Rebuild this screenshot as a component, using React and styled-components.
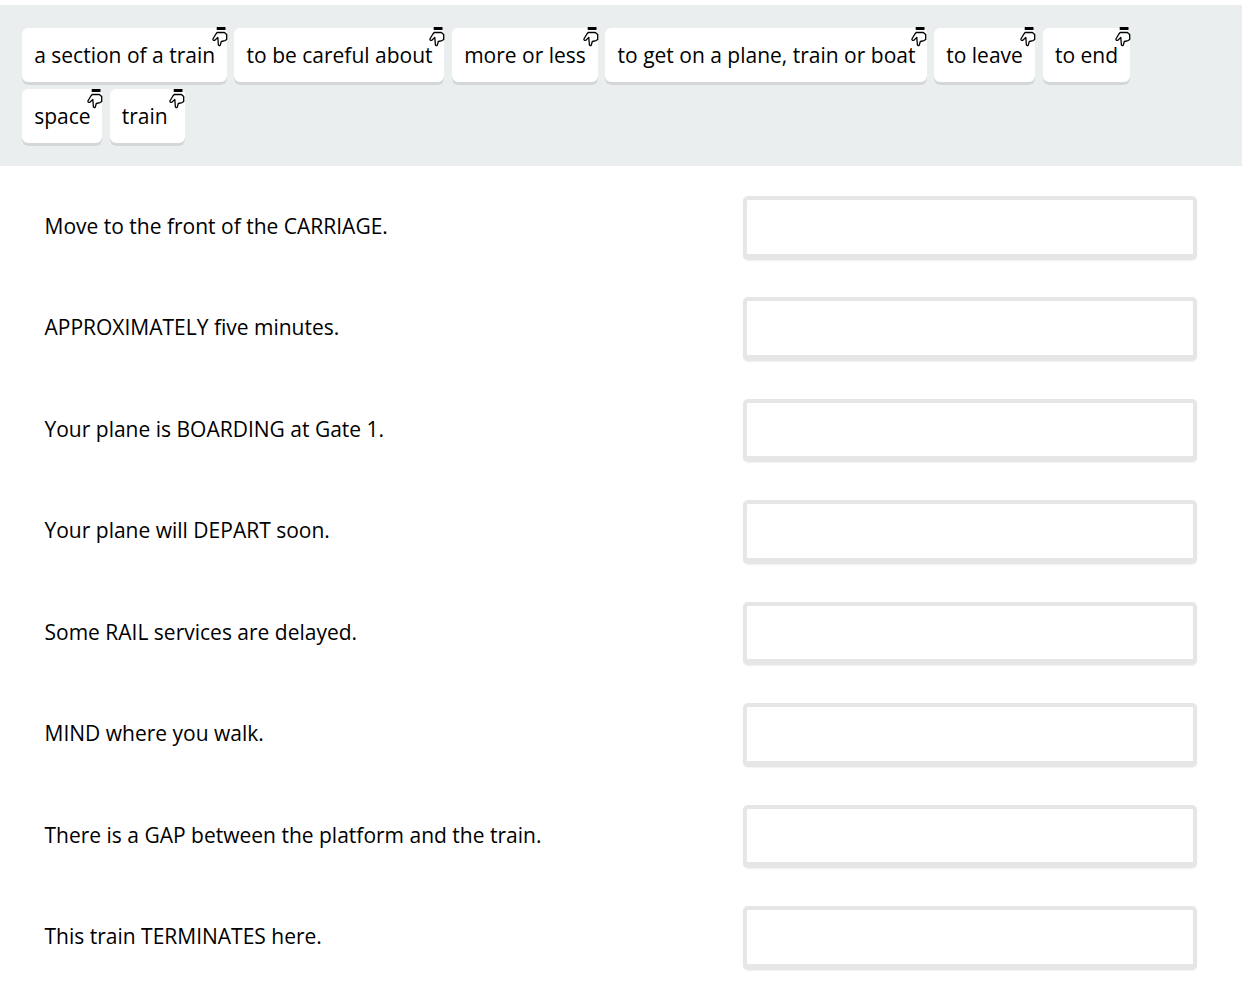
import React from 'react';
import styled, { createGlobalStyle } from 'styled-components';

const GlobalStyle = createGlobalStyle`
  * { box-sizing: border-box; }
  body {
    margin: 0;
    background: #fff;
    color: #000;
    font-family: "Open Sans", sans-serif;
    font-size: 21px;
    overflow: hidden;
  }
`;

const Page = styled.main`
  width: 1242px;
  height: 983px;
  padding-top: 5px;
  overflow: hidden;
`;

const WordBank = styled.section`
  display: flex;
  flex-wrap: wrap;
  align-content: flex-start;
  gap: 4.4px 7.5px;
  height: 161px;
  padding: 23px 60px 0 22px;
  background: #eaeeef;
`;

const Chip = styled.div`
  position: relative;
  width: ${({ $width }) => $width}px;
  height: 57px;
  padding: 0 0 0 12.2px;
  line-height: 54px;
  white-space: nowrap;
  background: #fff;
  border-radius: 6px;
  box-shadow: inset 0 -3px 0 #d3d7d7;
`;

const Hand = styled.svg`
  position: absolute;
  top: -0.6px;
  right: -0.9px;
  width: 16px;
  height: 20px;
  overflow: visible;
`;

const Questions = styled.section`
  padding: 30px 45.5px 0 44.5px;
`;

const Row = styled.div`
  display: flex;
  justify-content: space-between;
  height: 101.45px;
`;

const Prompt = styled.div`
  line-height: 60px;
  white-space: nowrap;
`;

const Slot = styled.div`
  width: 453.5px;
  height: 63.6px;
  border: 4px solid #e6e6e6;
  border-bottom-width: 6px;
  border-radius: 5px;
  background: #fff;
  box-shadow: 0 1px 2px rgba(0, 0, 0, 0.06);
`;

const words = [
  ['a section of a train', 204.9],
  ['to be careful about', 210.1],
  ['more or less', 145.9],
  ['to get on a plane, train or boat', 321.2],
  ['to leave', 101.2],
  ['to end', 87],
  ['space', 80],
  ['train', 75],
];

const prompts = [
  'Move to the front of the CARRIAGE.',
  'APPROXIMATELY five minutes.',
  'Your plane is BOARDING at Gate 1.',
  'Your plane will DEPART soon.',
  'Some RAIL services are delayed.',
  'MIND where you walk.',
  'There is a GAP between the platform and the train.',
  'This train TERMINATES here.',
];

function HandDown() {
  return (
    <Hand viewBox="0 0 16 20" aria-hidden="true">
      <path d="M4.7 0H13.5V3H4.7Z" />
      <path
        d="M5.2 5.5H12.4L14.7 7.6V12.4L13.1 13.6L9.3 14.5L8.3 18Q7.3 19.4 6.4 18L5.8 10.4L2.9 13.2Q.8 13.8 .9 12L3.9 7Z"
        fill="#fff"
        stroke="#000"
        strokeWidth="1.3"
        strokeLinejoin="round"
      />
    </Hand>
  );
}

export default function App() {
  return (
    <Page>
      <GlobalStyle />
      <WordBank>
        {words.map(([word, width]) => (
          <Chip key={word} $width={width}>
            {word}
            <HandDown />
          </Chip>
        ))}
      </WordBank>
      <Questions>
        {prompts.map((prompt) => (
          <Row key={prompt}>
            <Prompt>{prompt}</Prompt>
            <Slot />
          </Row>
        ))}
      </Questions>
    </Page>
  );
}
